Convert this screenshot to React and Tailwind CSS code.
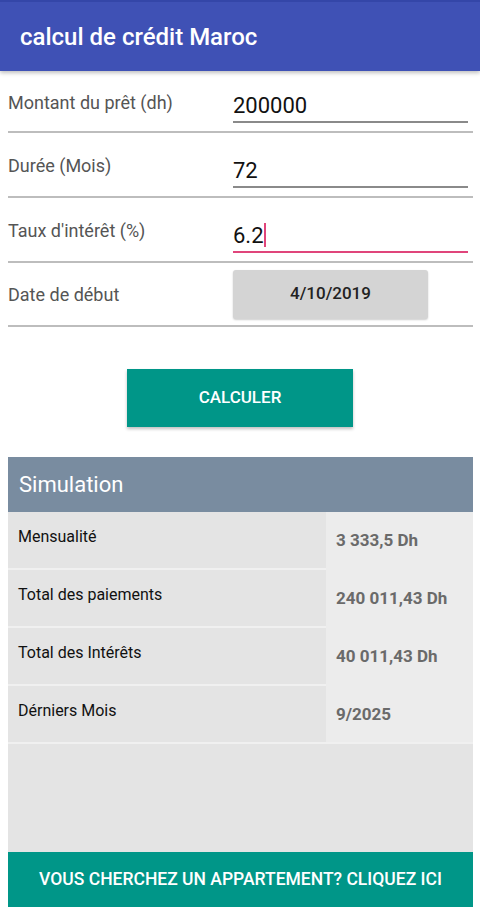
import React from 'react';

const fields = [
  { label: 'Montant du prêt (dh)', value: '200000' },
  { label: 'Durée (Mois)', value: '72' },
  { label: "Taux d'intérêt (%)", value: '6.2', focused: true },
];

const results = [
  { label: 'Mensualité', value: '3 333,5 Dh' },
  { label: 'Total des paiements', value: '240 011,43 Dh' },
  { label: 'Total des Intérêts', value: '40 011,43 Dh' },
  { label: 'Dérniers Mois', value: '9/2025' },
];

export default function App() {
  return (
    <div className="w-[480px] h-[913px] bg-white flex flex-col overflow-hidden" style={{ fontFamily: 'Roboto, "Noto Sans", sans-serif' }}>
      {/* toolbar */}
      <div className="h-[71px] shrink-0 bg-[#3f51b5] border-t-2 border-[#3446a8] flex items-center px-5 shadow-[0_2px_4px_rgba(0,0,0,0.25)] relative z-10">
        <h1 className="text-white text-[24px] font-medium">calcul de crédit Maroc</h1>
      </div>

      {/* form */}
      <div className="px-2 pr-[7px]">
        {fields.map((f, i) => (
          <div key={f.label} className={`${i === 0 ? 'h-[62px]' : 'h-[65px]'} border-b-2 border-[#bdbdbd] flex`}>
            <div className="w-[225px] text-[18px] text-[#555] self-center mt-[2px]">{f.label}</div>
            <div className="flex-1 pr-[5px] self-end mb-[8px]">
              <div className={`h-[34px] flex items-end text-[22px] text-[#111] border-b-2 ${f.focused ? 'border-[#e0457b]' : 'border-[#8a8a8a]'}`}>
                <span className="leading-[30px]">{f.value}</span>
                {f.focused && <span className="w-[2px] h-[24px] bg-[#e0457b] mb-[4px]" />}
              </div>
            </div>
          </div>
        ))}
        <div className="h-[64px] border-b-2 border-[#bdbdbd] flex items-center">
          <div className="w-[225px] text-[18px] text-[#555]">Date de début</div>
          <button className="w-[195px] h-[49px] rounded-[3px] bg-[#d4d4d4] shadow-[0_1px_2px_rgba(0,0,0,0.2)] text-[17px] font-medium text-[#222]">
            4/10/2019
          </button>
        </div>
      </div>

      {/* calculate */}
      <div className="flex justify-center pt-[42px] pb-[30px]">
        <button className="w-[226px] h-[58px] bg-[#009688] text-white text-[17px] font-medium shadow-[0_2px_3px_rgba(0,0,0,0.25)]">
          CALCULER
        </button>
      </div>

      {/* simulation card */}
      <div className="mx-2 mr-[7px] flex flex-col">
        <div className="h-[55px] bg-[#798ca0] flex items-center px-[11px]">
          <span className="text-white text-[22px]">Simulation</span>
        </div>
        <div className="flex bg-[#e4e4e4]">
          <div className="w-[318px] flex flex-col">
            {results.map((r, i) => (
              <div key={r.label} className={`${i < results.length - 1 ? 'h-[58px] border-b-2 border-[#f0f0f0]' : 'h-[56px]'} bg-[#e4e4e4] pl-[10px] pt-[13px] text-[16px] text-[#111]`}>
                {r.label}
              </div>
            ))}
          </div>
          <div className="flex-1 flex flex-col bg-[#ececec]">
            {results.map((r, i) => (
              <div key={r.label} className={`${i < results.length - 1 ? 'h-[58px]' : 'h-[56px]'} pl-[10px] pt-[16px] text-[17px] font-bold text-[#6a6a6a]`}>
                {r.value}
              </div>
            ))}
          </div>
        </div>
        <div className="h-[110px] bg-[#e4e4e4] border-t-2 border-[#f0f0f0]" />
        <button className="h-[55px] bg-[#009688] text-white text-[17.5px] font-medium">
          VOUS CHERCHEZ UN APPARTEMENT? CLIQUEZ ICI
        </button>
      </div>
    </div>
  );
}
